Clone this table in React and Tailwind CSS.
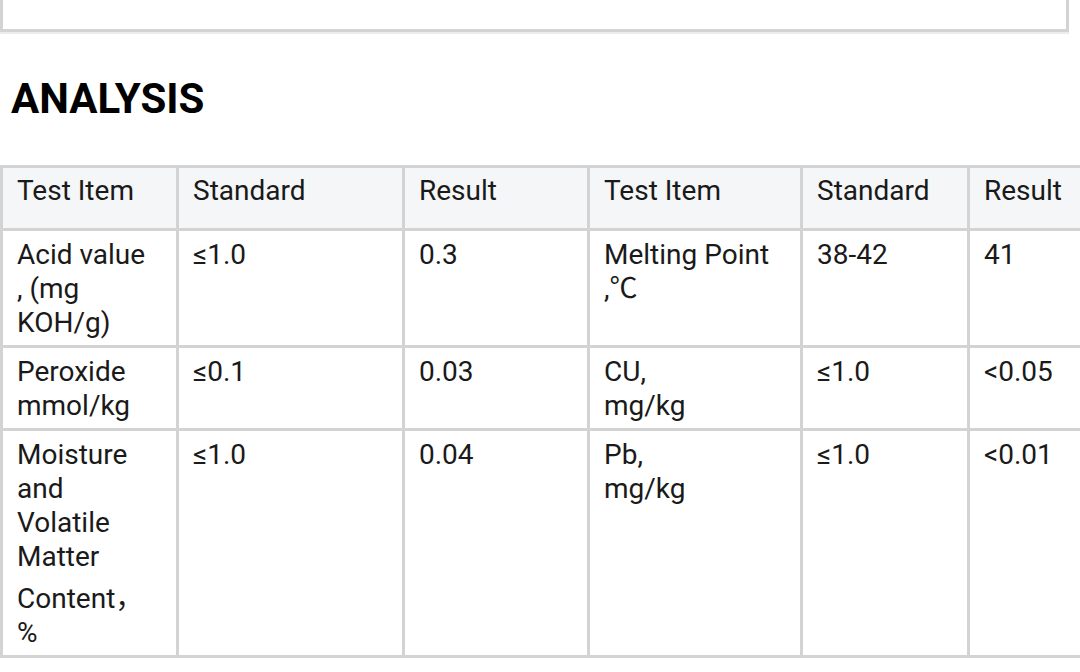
const rows = [
  {
    item: ['Acid value', ', (mg', 'KOH/g)'],
    standard: '≤1.0',
    result: '0.3',
    item2: ['Melting Point', ',℃'],
    standard2: '38-42',
    result2: '41',
  },
  {
    item: ['Peroxide', 'mmol/kg'],
    standard: '≤0.1',
    result: '0.03',
    item2: ['CU,', 'mg/kg'],
    standard2: '≤1.0',
    result2: '<0.05',
  },
  {
    item: ['Moisture', 'and', 'Volatile', 'Matter'],
    extra: ['Content，', '%'],
    standard: '≤1.0',
    result: '0.04',
    item2: ['Pb,', 'mg/kg'],
    standard2: '≤1.0',
    result2: '<0.01',
  },
]

function Lines({ lines }) {
  return lines.map((line, i) => (
    <span key={i} className="block">
      {line}
    </span>
  ))
}

export default function App() {
  const th = 'border-[3px] border-[#d3d3d3] bg-[#f5f6f8] px-[14px] pt-[6px] pb-[20px] text-left font-normal align-top'
  const td = 'border-[3px] border-[#d3d3d3] px-[14px] pt-[7px] pb-[5px] align-top'

  return (
    <div
      className="w-[1080px] h-[672px] overflow-hidden bg-white text-[#1a1a1a]"
      style={{ fontFamily: 'Roboto, "Noto Sans CJK SC", sans-serif' }}
    >
      {/* leftover box from the section above */}
      <div className="w-[1069px] h-[32px] border-x-[3px] border-b-[3px] border-[#d3d3d3] shadow-[0_2px_0_#ececec]" />

      <h2 className="mt-[43px] ml-[11px] text-[42px] leading-[48px] font-bold text-black">ANALYSIS</h2>

      <table className="mt-[42px] table-fixed border-collapse w-[1106px] text-[28px] leading-[34px]">
        <colgroup>
          <col className="w-[176px]" />
          <col className="w-[226px]" />
          <col className="w-[185px]" />
          <col className="w-[213px]" />
          <col className="w-[167px]" />
          <col className="w-[139px]" />
        </colgroup>
        <thead>
          <tr>
            <th className={th}>Test Item</th>
            <th className={th}>Standard</th>
            <th className={th}>Result</th>
            <th className={th}>Test Item</th>
            <th className={th}>Standard</th>
            <th className={th}>Result</th>
          </tr>
        </thead>
        <tbody>
          {rows.map((row, i) => (
            <tr key={i}>
              <td className={td}>
                <Lines lines={row.item} />
                {row.extra && (
                  <div className="mt-[8px]">
                    <Lines lines={row.extra} />
                  </div>
                )}
              </td>
              <td className={td}>{row.standard}</td>
              <td className={td}>{row.result}</td>
              <td className={td}>
                <Lines lines={row.item2} />
              </td>
              <td className={td}>{row.standard2}</td>
              <td className={td}>{row.result2}</td>
            </tr>
          ))}
        </tbody>
      </table>
    </div>
  )
}
